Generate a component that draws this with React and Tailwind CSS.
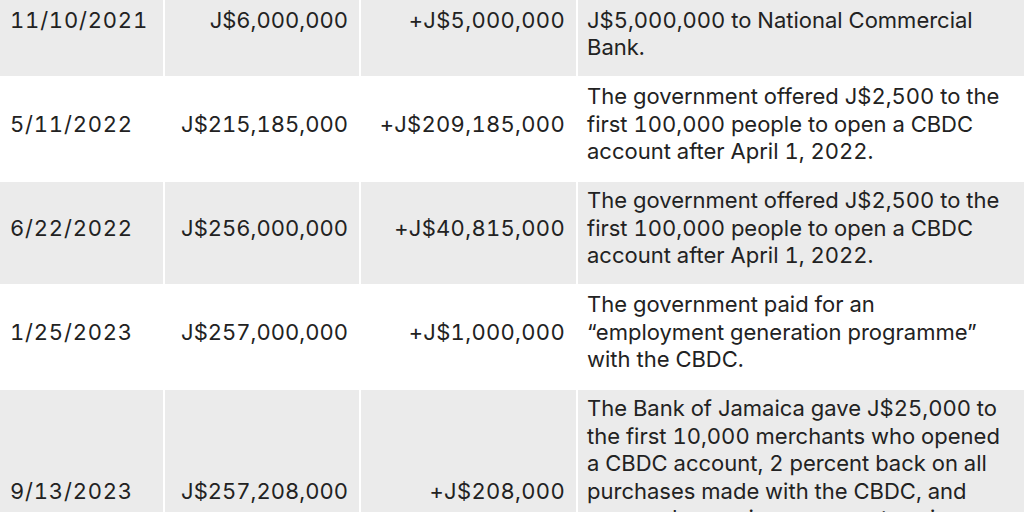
export default function App() {
  const rows = [
    {
      d: "11/10/2021",
      a: "J$6,000,000",
      c: "+J$5,000,000",
      t: ["The central bank issued its first", "J$5,000,000 to National Commercial", "Bank."],
      g: true,
      pad: "pt-[5px] pb-[14.5px]",
    },
    {
      d: "5/11/2022",
      a: "J$215,185,000",
      c: "+J$209,185,000",
      t: ["The government offered J$2,500 to the", "first 100,000 people to open a CBDC", "account after April 1, 2022."],
      g: false,
      pad: "pt-[5px] pb-[14.5px]",
    },
    {
      d: "6/22/2022",
      a: "J$256,000,000",
      c: "+J$40,815,000",
      t: ["The government offered J$2,500 to the", "first 100,000 people to open a CBDC", "account after April 1, 2022."],
      g: true,
      pad: "pt-[5px] pb-[14.5px]",
    },
    {
      d: "1/25/2023",
      a: "J$257,000,000",
      c: "+J$1,000,000",
      t: ["The government paid for an", "\u201cemployment generation programme\u201d", "with the CBDC."],
      g: false,
      pad: "pt-[5px] pb-[14.5px]",
    },
    {
      d: "9/13/2023",
      a: "J$257,208,000",
      c: "+J$208,000",
      t: [
        "The Bank of Jamaica gave J$25,000 to",
        "the first 10,000 merchants who opened",
        "a CBDC account, 2 percent back on all",
        "purchases made with the CBDC, and",
        "a reward on various payments using",
        "the CBDC for merchants and customers",
        "through the end of 2023.",
      ],
      g: true,
      pad: "pt-[5px] pb-[14.5px]",
    },
  ];
  return (
    <div
      className="w-[1024px] h-[512px] overflow-hidden bg-white text-[#222222] text-[22px] leading-[27.5px] tabular-nums"
      style={{ fontFamily: "Inter, 'Liberation Sans', sans-serif" }}
    >
      <div className="-mt-[26px] grid grid-cols-[163px_194px_215px_446px] gap-[2px]">
        {rows.map((r, i) => {
          const bg = r.g ? "bg-[#ebebeb]" : "bg-white";
          return [
            <div key={i + "d"} className={`${bg} ${r.pad} flex items-center pl-[10px] pr-[8px] tracking-[0.8px]`}>
              {r.d}
            </div>,
            <div key={i + "a"} className={`${bg} ${r.pad} flex items-center justify-end pl-[8px] pr-[11px]`}>
              {r.a}
            </div>,
            <div key={i + "c"} className={`${bg} ${r.pad} flex items-center justify-end pl-[8px] pr-[11px] tracking-[0.3px]`}>
              {r.c}
            </div>,
            <div key={i + "t"} className={`${bg} ${r.pad} flex flex-col justify-center pl-[9px] pr-[6px]`}>
              {r.t.map((line, j) => (
                <span key={j} className="block whitespace-nowrap">
                  {line}
                </span>
              ))}
            </div>,
          ];
        })}
      </div>
    </div>
  );
}
